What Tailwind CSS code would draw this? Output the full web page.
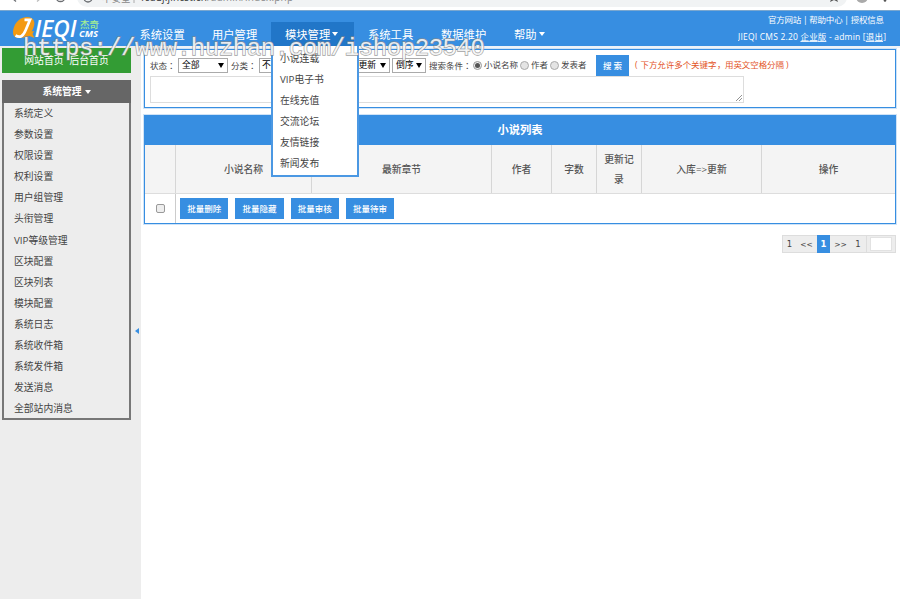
<!DOCTYPE html>
<html lang="zh-CN">
<head>
<meta charset="utf-8">
<title>JIEQI CMS</title>
<script src="https://cdn.jsdelivr.net/npm/@tailwindcss/browser@4"></script>
</head>
<body class="relative w-[900px] h-[599px] overflow-hidden bg-white text-[9.8px] text-[#444] font-['Open_Sans','Noto_Sans_CJK_SC',sans-serif] whitespace-nowrap">

<!-- browser toolbar -->
<div class="h-[10px] overflow-hidden bg-white">
  <svg width="900" height="10" viewBox="0 0 900 10">
    <rect x="77" y="-14" width="770" height="21" rx="10" fill="#f1f3f4"/>
    <g fill="none" stroke="#6b6e72" stroke-width="1.3">
      <path d="M12-2l4 3.5"/><path d="M41-2l-4 3.5" stroke="#bbb"/><path d="M56-3a4.5 4.5 0 0 0 9 0"/>
      <circle cx="88" cy="-2" r="4"/>
    </g>
    <text x="102" y="1.500" font-size="9.500" fill="#888">不安全</text>
    <path d="M134 0v3" stroke="#aaa"/>
    <text x="141" y="1" font-size="10" fill="#333" textLength="152">fcduj.jincst.cn<tspan fill="#888">/admin/index.php</tspan></text>
    <path d="M830 2l1.500-4h5l1.500 4-4-2z" fill="#555"/>
    <circle cx="862" cy="-3" r="6" fill="#aaa"/><circle cx="885" cy="0.500" r="1.300" fill="#555"/>
  </svg>
</div>

<!-- header -->
<header class="relative h-[36px] flex bg-[#378ee1] border-t border-[#7aa7cf] text-white">
  <svg class="shrink-0" width="125" height="35" viewBox="0 0 125 35">
    <path d="M27 6C18 6 13 15 13 21c0 4 2 6 6 6 7 0 11-3 14-9 3-7 1-12-6-12z" fill="#f39a12"/>
    <path d="M27 21l7-1-1.500 3 2 4-5-2-4 1z" fill="#f39a12"/>
    <path d="M24.500 8.800H30L25.500 19.500C23 25.500 20 27 15.500 24.500" fill="none" stroke="#fff" stroke-width="2.700"/>
    <text x="34.500" y="25.500" font-family="Open Sans" font-size="23" font-style="italic" font-weight="600" fill="#fff" textLength="42" lengthAdjust="spacingAndGlyphs">IEQI</text>
    <text x="80" y="17" font-family="Noto Sans CJK SC" font-size="9.500" font-weight="500" fill="#a5ef92">杰奇</text>
    <text x="79" y="26" font-family="Open Sans" font-size="8" font-style="italic" font-weight="700" fill="#fff" textLength="19" lengthAdjust="spacingAndGlyphs">CMS</text>
  </svg>
  <nav class="flex pt-[11px] text-[11.3px] leading-[25px]">
    <a class="w-[73px] pl-[14.500px]">系统设置</a>
    <a class="w-[73px] pl-[14px]">用户管理</a>
    <a class="w-[83px] pl-[14px] bg-[#2176c8] flex items-center">模块管理<i class="ml-[2px] border-x-[3.5px] border-x-transparent border-t-4 border-t-white"></i></a>
    <a class="w-[73px] pl-[14px]">系统工具</a>
    <a class="w-[73px] pl-[14px]">数据维护</a>
    <a class="w-[60px] pl-[14px] flex items-center">帮助<i class="ml-[2px] border-x-[3.5px] border-x-transparent border-t-4 border-t-white"></i></a>
  </nav>
  <div class="ml-auto w-[162px] text-[8.5px]">
    <div class="pl-[30px] h-[17px] leading-[17px]"><svg class="block" width="120" height="17"><text x="0" y="11.500" fill="#fff" textLength="116">官方网站 | 帮助中心 | 授权信息</text></svg></div>
    <div><svg class="block" width="150" height="17"><text x="0" y="12" fill="#fff" textLength="148">JIEQI CMS 2.20 <tspan text-decoration="underline">企业版</tspan> - admin [<tspan text-decoration="underline">退出</tspan>]</text></svg></div>
  </div>

  <ul class="absolute z-10 left-[271px] top-[35px] w-[88px] h-[131px] pt-[2px] pl-[7px] border-2 border-t-0 border-[#4b98e3] bg-white text-[#444] leading-[21.1px]">
    <li>小说连载</li><li>VIP电子书</li><li>在线充值</li><li>交流论坛</li><li>友情链接</li><li>新闻发布</li>
  </ul>
</header>

<div class="flex h-[553px]">
  <aside class="relative shrink-0 w-[141px] pt-[2px] pl-[2px] bg-[#ededed]">
    <div class="w-[129px] h-[25px] flex justify-center gap-[6px] leading-[25px] bg-[#339c34] text-white"><span>网站首页</span><span>后台首页</span></div>
    <div class="mt-[7px] w-[129px] h-[340px] border-2 border-t-0 border-[#777]">
      <div class="-mx-[2px] h-[23px] pt-px flex items-center justify-center bg-[#666] text-white font-bold">系统管理<i class="ml-[3px] border-x-[3.5px] border-x-transparent border-t-4 border-t-white"></i></div>
      <ul class="pl-[10px] leading-[21.1px]">
        <li>系统定义</li><li>参数设置</li><li>权限设置</li><li>权利设置</li><li>用户组管理</li><li>头衔管理</li><li>VIP等级管理</li><li>区块配置</li><li>区块列表</li><li>模块配置</li><li>系统日志</li><li>系统收件箱</li><li>系统发件箱</li><li>发送消息</li><li>全部站内消息</li>
      </ul>
    </div>
    <i class="absolute left-[135px] top-[282px] border-y-[3px] border-y-transparent border-r-4 border-r-[#378ee1]"></i>
  </aside>

  <main class="flex-1 border-t-2 border-[#eef3f8] pl-[3px] pr-[4px] pt-px">
    <section class="h-[59px] border border-[#378ee1] shadow-[0_0_0_1px_#cfe3f7] pl-[5px] text-[8.5px]">
      <div class="flex h-[26px] pt-[5px]">
        <div class="flex items-center h-[21px]">
          <label class="w-[28px]">状态<span lang="zh-TW" class="font-['Noto_Sans_CJK_TC']">：</span></label>
          <div class="w-[50px] h-[15px] border border-[#aaa] flex items-center justify-between pl-[3px] pr-[3px] text-[8.8px] text-black">全部<i class="border-x-[3px] border-x-transparent border-t-[5px] border-t-black"></i></div>
          <label class="w-[31px] pl-[3px]">分类<span lang="zh-TW" class="font-['Noto_Sans_CJK_TC']">：</span></label>
          <div class="w-[60px] h-[15px] border border-[#aaa] flex items-center pl-[2px] text-[8.8px] text-black">不限</div>
          <div class="ml-[18px] w-[53px] h-[15px] border border-[#aaa] flex items-center justify-end gap-[4px] pr-[3px] text-[8.8px] text-black">最近更新<i class="border-x-[3px] border-x-transparent border-t-[5px] border-t-black"></i></div>
          <div class="ml-[2px] w-[34px] h-[15px] border border-[#aaa] flex items-center justify-between pl-[3px] pr-[3px] text-[8.8px] text-black">倒序<i class="border-x-[3px] border-x-transparent border-t-[5px] border-t-black"></i></div>
          <label class="w-[47px] pl-[3px]">搜索条件<span lang="zh-TW" class="font-['Noto_Sans_CJK_TC']">：</span></label>
          <i class="size-[9px] rounded-full border border-[#999] bg-[#eee] flex items-center justify-center"><b class="size-[5px] rounded-full bg-[#555]"></b></i><span class="w-[38px] pl-[2px]">小说名称</span>
          <i class="size-[9px] rounded-full border border-[#aaa] bg-[#e4e4e4]"></i><span class="w-[21px] pl-[2px]">作者</span>
          <i class="size-[9px] rounded-full border border-[#aaa] bg-[#e4e4e4]"></i><span class="w-[37px] pl-[2px]">发表者</span>
          <div class="w-[33px] h-[21px] bg-[#378ee1] text-white text-center leading-[21px] font-medium">搜 索</div>
          <svg class="ml-[2px]" width="164" height="20"><text y="12" fill="#e3541f"><tspan x="4">(</tspan><tspan x="9.500" textLength="76">下方允许多个关键字</tspan><tspan x="86">，</tspan><tspan x="94" textLength="59">用英文空格分隔</tspan><tspan x="155">)</tspan></text></svg>
        </div>
      </div>
      <div class="w-[594px] h-[27px] border border-[#ddd] flex items-end justify-end"><svg width="8" height="8" stroke="#777" stroke-width=".8"><path d="M1 7L7 1M4 7l3-3"/></svg></div>
    </section>

    <section class="mt-[7px] h-[109px] border border-[#378ee1] shadow-[0_0_0_1px_#cfe3f7]">
      <h1 class="h-[29px] leading-[28px] bg-[#378ee1] text-white text-center font-bold text-[11.3px]">小说列表</h1>
      <div class="grid grid-cols-[31px_136px_180px_60px_45px_45px_120px_1fr] h-[49px] bg-[#f4f4f4] border-b border-[#ddd] font-medium text-[#555] text-center leading-[19.5px] *:pt-px *:flex *:items-center *:justify-center *:border-r *:border-[#d6d6d6]">
        <div></div><div>小说名称</div><div>最新章节</div><div>作者</div><div>字数</div><div>更新记<br>录</div><div>入库=&gt;更新</div><div class="border-r-0!">操作</div>
      </div>
      <div class="flex h-[29px]">
        <div class="w-[31px] pb-px border-r border-[#ccc] flex items-center justify-center"><i class="size-[9px] rounded-[2px] border border-[#999] bg-[#eee]"></i></div>
        <div class="flex items-center gap-[7px] pl-[4px] text-white text-[8.5px] font-medium *:w-[48.3px] *:h-[21px] *:leading-[21px] *:text-center *:bg-[#378ee1]">
          <a>批量删除</a><a>批量隐藏</a><a>批量审核</a><a>批量待审</a>
        </div>
      </div>
    </section>

    <div class="mt-[11px] ml-auto w-[114px] h-[18px] flex leading-[17px] border border-[#ddd] bg-[#ededed] text-[8.5px] font-['DejaVu_Sans',sans-serif] text-center">
      <span class="w-[13px]">1</span><span class="w-[21px] text-[7.5px]">&lt;&lt;</span><b class="w-[13px] -my-px leading-[19px] bg-[#378ee1] text-white">1</b><span class="w-[21px] text-[7.5px]">&gt;&gt;</span><span class="w-[14px]">1</span>
      <span class="ml-px flex-1 border-l border-[#ddd] flex items-center justify-center"><i class="w-[22px] h-[14px] bg-white border border-[#e2e2e2]"></i></span>
    </div>
  </main>
</div>

<!-- site watermark -->
<svg class="absolute z-20 left-0 top-[28px] pointer-events-none" width="500" height="40"><text x="23" y="27" font-family="Liberation Mono" font-size="24" fill="#fff" fill-opacity=".85" stroke="#888" stroke-opacity=".8" stroke-width="1.300" paint-order="stroke" textLength="462">https://www.huzhan.com/ishop23540</text></svg>
</body>
</html>
